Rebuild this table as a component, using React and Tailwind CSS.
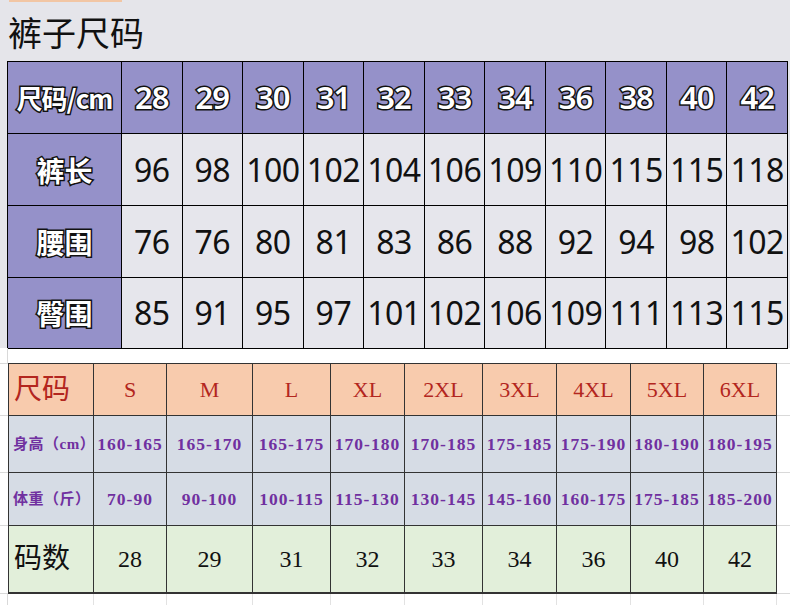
const headSizes = ["28", "29", "30", "31", "32", "33", "34", "36", "38", "40", "42"];

const pantsRows = [
  { label: "裤长", values: [96, 98, 100, 102, 104, 106, 109, 110, 115, 115, 118] },
  { label: "腰围", values: [76, 76, 80, 81, 83, 86, 88, 92, 94, 98, 102] },
  { label: "臀围", values: [85, 91, 95, 97, 101, 102, 106, 109, 111, 113, 115] },
];

const letterSizes = ["S", "M", "L", "XL", "2XL", "3XL", "4XL", "5XL", "6XL"];
const heights = ["160-165", "165-170", "165-175", "170-180", "170-185", "175-185", "175-190", "180-190", "180-195"];
const weights = ["70-90", "90-100", "100-115", "115-130", "130-145", "145-160", "160-175", "175-185", "185-200"];
const codes = ["28", "29", "31", "32", "33", "34", "36", "40", "42"];

// outlined white text used in the purple cells
const outline =
  "text-white [-webkit-text-stroke:3px_#111] [paint-order:stroke_fill]";

const serif = "font-['Liberation_Serif','Noto_Sans_CJK_SC',serif]";

function PantsTable() {
  return (
    <div className="ml-[7px] grid w-[781px] grid-cols-[114px_repeat(11,1fr)] grid-rows-[72px_72px_72px_71px] border-l border-t border-black">
      <div className={`flex items-center justify-center border-b border-r border-black bg-[#9591c9] text-[26px] font-bold tracking-[-1px] font-['Noto_Sans_CJK_SC',sans-serif] ${outline}`}>
        尺码/cm
      </div>
      {headSizes.map((s) => (
        <div
          key={s}
          className={`flex items-center justify-center border-b border-r border-black bg-[#9591c9] text-[31px] font-semibold tracking-[-1px] font-['Noto_Sans',sans-serif] ${outline}`}
        >
          {s}
        </div>
      ))}
      {pantsRows.map((row) => (
        <div key={row.label} className="contents">
          <div className={`flex items-center justify-center border-b border-r border-black bg-[#9591c9] text-[28px] font-bold font-['Noto_Sans_CJK_SC',sans-serif] ${outline}`}>
            {row.label}
          </div>
          {row.values.map((v, i) => (
            <div
              key={i}
              className="flex items-center justify-center border-b border-r border-black bg-[#e6e6ec] text-[32px] tracking-[-0.5px] text-[#111] font-['Noto_Sans',sans-serif]"
            >
              {v}
            </div>
          ))}
        </div>
      ))}
    </div>
  );
}

function Side({ top, bottom, right }) {
  return (
    <div
      className={`border-[#d9d9d9] ${top ? "border-t" : ""} ${bottom ? "border-b" : ""} ${right ? "border-r" : ""}`}
    />
  );
}

function SizeTable() {
  const cell = "flex items-center border-r border-[#333]";
  return (
    <div className="grid grid-cols-[8px_86px_73px_86px_78px_74px_78px_74px_74px_73px_73px_13px] grid-rows-[15px_53px_57px_53px_68px_11px] bg-white">
      {/* gap row above the table */}
      <div className="border-r border-[#d9d9d9]" />
      <div className="col-span-11" />

      {/* header row */}
      <Side top bottom />
      <div className={`${cell} border-l border-t border-b bg-[#f8cbad] pl-[5px] text-[28px] text-[#b3261e] ${serif}`}>
        尺码
      </div>
      {letterSizes.map((s) => (
        <div key={s} className={`${cell} justify-center border-t border-b bg-[#f8cbad] text-[22px] text-[#b3261e] ${serif}`}>
          {s}
        </div>
      ))}
      <Side top bottom />

      {/* height row */}
      <Side bottom />
      <div className={`${cell} border-l border-b bg-[#d6dce5] pl-[4px] text-[15px] font-bold text-[#7030a0] tracking-[0.5px] ${serif}`}>
        身高（cm）
      </div>
      {heights.map((h) => (
        <div key={h + "h"} className={`${cell} justify-center border-b bg-[#d6dce5] text-[17.5px] font-bold tracking-[1px] text-[#7030a0] ${serif}`}>
          {h}
        </div>
      ))}
      <Side bottom />

      {/* weight row */}
      <Side bottom />
      <div className={`${cell} border-l border-b bg-[#d6dce5] pl-[4px] text-[15px] font-bold text-[#7030a0] tracking-[0.5px] ${serif}`}>
        体重（斤）
      </div>
      {weights.map((w) => (
        <div key={w + "w"} className={`${cell} justify-center border-b bg-[#d6dce5] text-[17.5px] font-bold tracking-[1px] text-[#7030a0] ${serif}`}>
          {w}
        </div>
      ))}
      <Side bottom />

      {/* code row */}
      <Side bottom />
      <div className={`${cell} border-l border-b-2 bg-[#e2efda] pl-[5px] text-[28px] text-[#111] ${serif}`}>
        码数
      </div>
      {codes.map((c, i) => (
        <div key={i} className={`${cell} justify-center border-b-2 bg-[#e2efda] text-[24px] text-[#111] ${serif}`}>
          {c}
        </div>
      ))}
      <Side bottom />

      {/* gridlines below */}
      <div className="border-r border-[#d9d9d9]" />
      {letterSizes.concat(["x"]).map((k) => (
        <div key={k + "g"} className="border-r border-[#e2e2e2]" />
      ))}
      <div />
    </div>
  );
}

export default function App() {
  return (
    <div className="h-[605px] w-[790px] overflow-hidden bg-white">
      <div className="h-[348px] bg-[#e5e5ea]">
        <div className="ml-[9px] h-[2px] w-[113px] bg-[#f2c6a4]" />
        <div className="flex h-[59px] items-center pl-[8px] text-[34px] leading-none text-[#111] font-['Noto_Sans_CJK_SC',sans-serif]">
          裤子尺码
        </div>
        <PantsTable />
      </div>
      <SizeTable />
    </div>
  );
}
